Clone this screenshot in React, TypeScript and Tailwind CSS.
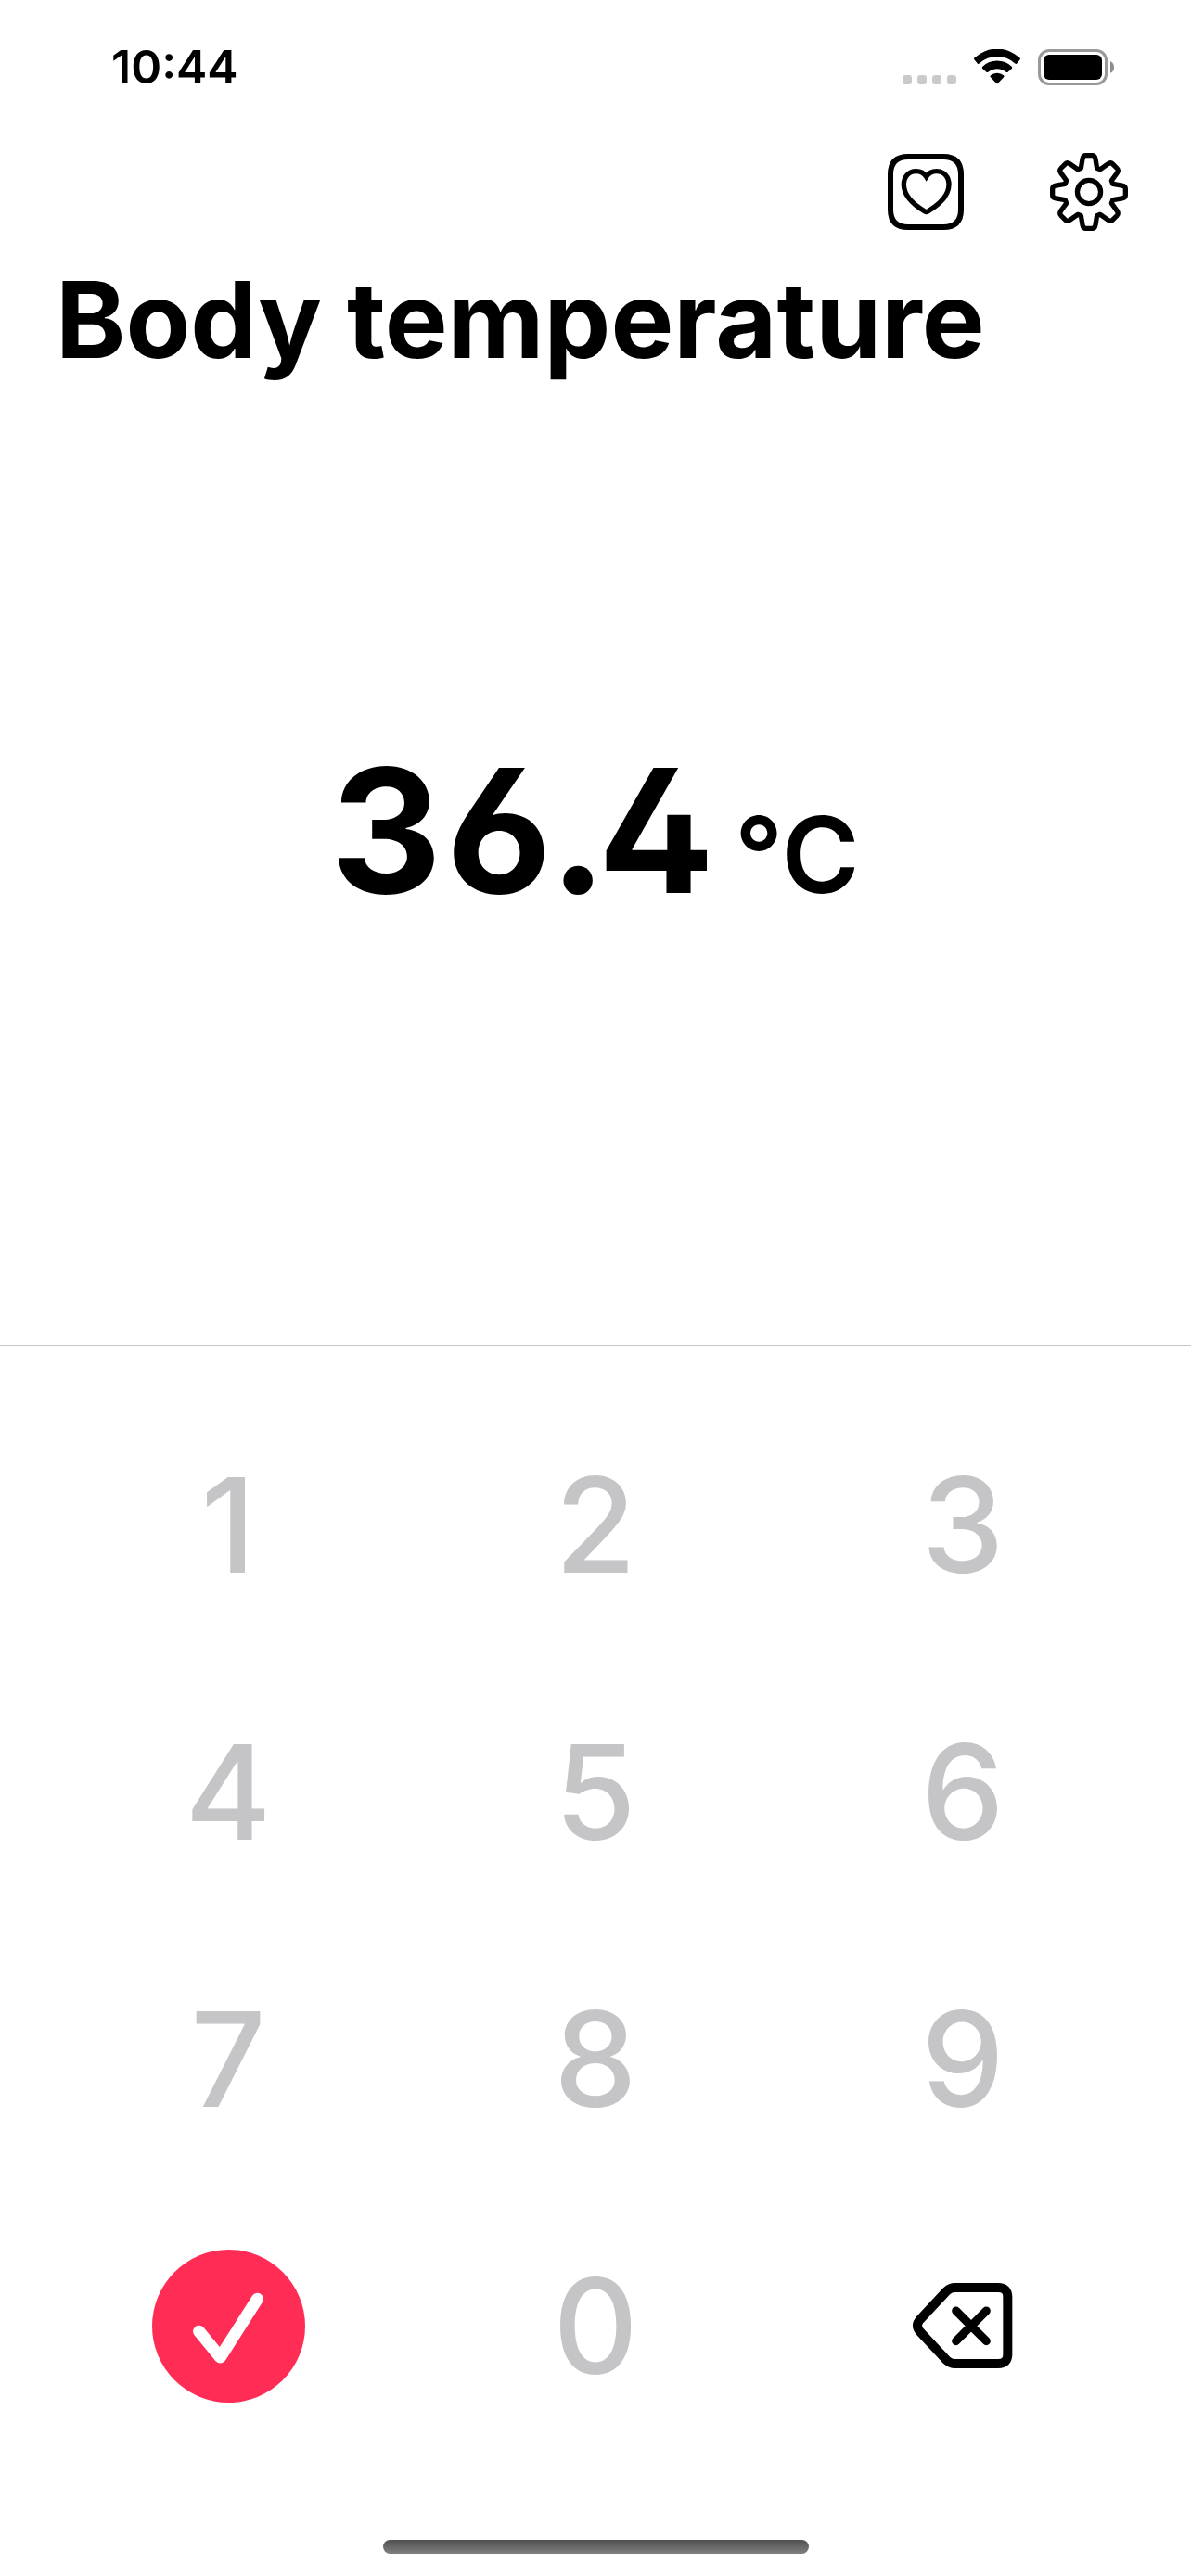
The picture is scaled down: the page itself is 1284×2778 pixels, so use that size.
import React, { useState } from 'react';

const digits = ['1', '2', '3', '4', '5', '6', '7', '8', '9'];

// One gear tooth pointing up, repeated every 45 degrees
const gearPath = (() => {
    const parts: string[] = [];
    for (let i = 0; i < 8; i++) {
        const a = (i * Math.PI) / 4;
        const p = (x: number, y: number) =>
            `${(x * Math.cos(a) - y * Math.sin(a)).toFixed(1)} ${(x * Math.sin(a) + y * Math.cos(a)).toFixed(1)}`;
        parts.push(
            `${i === 0 ? 'M' : 'L'}${p(-26, -78)} L${p(-21, -108)} Q${p(-19, -119)} ${p(-10, -119)} L${p(10, -119)} Q${p(19, -119)} ${p(21, -108)} L${p(26, -78)}`
        );
    }
    return parts.join(' ') + ' Z';
})();

const StatusBar: React.FC = () => (
    <div className="flex items-center justify-between pt-[42px] pl-[120px] pr-[82px]">
        <span className="text-[50px] leading-[60px] font-semibold">10:44</span>
        <div className="flex items-end">
            <div className="flex gap-1.5 pb-px">
                {[0, 1, 2, 3].map((dot) => (
                    <span key={dot} className="size-2.5 rounded-[3px] bg-[#cacaca]" />
                ))}
            </div>
            <svg className="ml-[18px] mb-px h-[38px] w-[52px]" viewBox="0 0 156 114">
                <path d="M4 34 Q2 31 5 28 A106 106 0 0 1 151 28 Q154 31 152 34 L141 47 Q138 49 135 46 A84 84 0 0 0 21 46 Q18 49 15 47 Z" />
                <path d="M30 62 Q28 59 31 56 A68 68 0 0 1 125 56 Q128 59 126 62 L112 75 Q110 76 107 74 A45 45 0 0 0 49 74 Q46 76 44 75 Z" />
                <path d="M56 90 Q54 87 57 85 A32 32 0 0 1 99 85 Q102 87 100 90 L80 111 Q78 113 76 111 Z" />
            </svg>
            <svg className="ml-[18px] h-[39px] w-[83px]" viewBox="0 0 83 39">
                <rect x="1.5" y="1.5" width="72" height="36" rx="10.5" fill="none" stroke="#999" strokeWidth="3" />
                <rect x="6" y="6" width="63" height="27" rx="6" />
                <path d="M78 13 Q82 15 82 19.5 Q82 24 78 26 Z" fill="#8c8c8c" />
            </svg>
        </div>
    </div>
);

const HeartIcon: React.FC = () => (
    <svg className="h-[82px] w-[82px]" viewBox="0 0 246 246" fill="none" stroke="currentColor" strokeLinejoin="round">
        <path strokeWidth="18" d="M66 9 H180 Q237 9 237 66 V180 Q237 237 180 237 H66 Q9 237 9 180 V66 Q9 9 66 9 Z" />
        <path
            strokeWidth="16"
            strokeLinejoin="miter"
            d="M125 74 C117 61 106 56 92 56 C68 56 52 74 52 99 C52 134 85 165 120 186 Q125 189 130 186 C165 165 198 134 198 99 C198 74 182 56 158 56 C144 56 133 61 125 74 Z"
        />
    </svg>
);

const GearIcon: React.FC = () => (
    <svg className="size-[84px]" viewBox="-127 -127 254 254" fill="none" stroke="currentColor" strokeWidth="16" strokeLinejoin="round">
        <path d={gearPath} />
        <circle r="38" />
    </svg>
);

const DeleteIcon: React.FC = () => (
    <svg className="h-[92px] w-[108px]" viewBox="0 0 324 276" fill="none" stroke="currentColor" strokeLinecap="round">
        <path
            strokeWidth="30"
            d="M137 15 H276 Q307 15 307 46 V230 Q307 261 276 261 H137 Q122 261 110 250 L22 156 Q8 138 22 120 L110 26 Q122 15 137 15 Z"
        />
        <path strokeWidth="27" d="M140 90 L238 188 M238 90 L140 188" />
    </svg>
);

export default function App() {
    const [value, setValue] = useState('36.4');

    const press = (digit: string) => setValue((v) => (v.length < 4 ? (v.length === 2 ? v + '.' + digit : v + digit) : v));

    return (
        <main className="flex min-h-screen flex-col bg-white font-['Inter',sans-serif] text-black">
            <StatusBar />
            <nav className="mt-[63px] flex justify-end gap-[93px] pr-[68px]">
                <button aria-label="Health">
                    <HeartIcon />
                </button>
                <button aria-label="Settings">
                    <GearIcon />
                </button>
            </nav>
            <h1 className="mt-6 px-[60px] text-[114px] leading-[144px] font-bold">Body temperature</h1>

            <section className="flex flex-1 items-baseline justify-center gap-6 border-b border-[#c6c6c8] pt-[367px]">
                <span className="text-[186px] leading-[224px] font-bold [font-feature-settings:'tnum','cv02','cv03']">{value}</span>
                <span className="text-[114px] font-semibold">°C</span>
            </section>

            <div className="grid auto-rows-[288px] grid-cols-3 px-12 pt-12 text-[142px] font-medium text-[#c5c5c7]">
                {digits.map((digit) => (
                    <button key={digit} onClick={() => press(digit)}>
                        {digit}
                    </button>
                ))}
                <button aria-label="Save" className="flex items-center justify-center">
                    <svg className="size-[165px] rounded-full bg-[#ff2d55]" viewBox="0 0 496 496" fill="none" stroke="white">
                        <path strokeWidth="39" strokeLinecap="round" strokeLinejoin="round" d="M152 265 L221 349 L341 160" />
                    </svg>
                </button>
                <button onClick={() => press('0')}>0</button>
                <button aria-label="Delete" onClick={() => setValue((v) => v.slice(0, -1))} className="flex items-center justify-center text-black">
                    <DeleteIcon />
                </button>
            </div>

            <div className="flex justify-center pt-[87px] pb-6">
                <div className="h-[15px] w-[459px] rounded-full bg-linear-to-b from-[#505050] to-[#808080]" />
            </div>
        </main>
    );
}
